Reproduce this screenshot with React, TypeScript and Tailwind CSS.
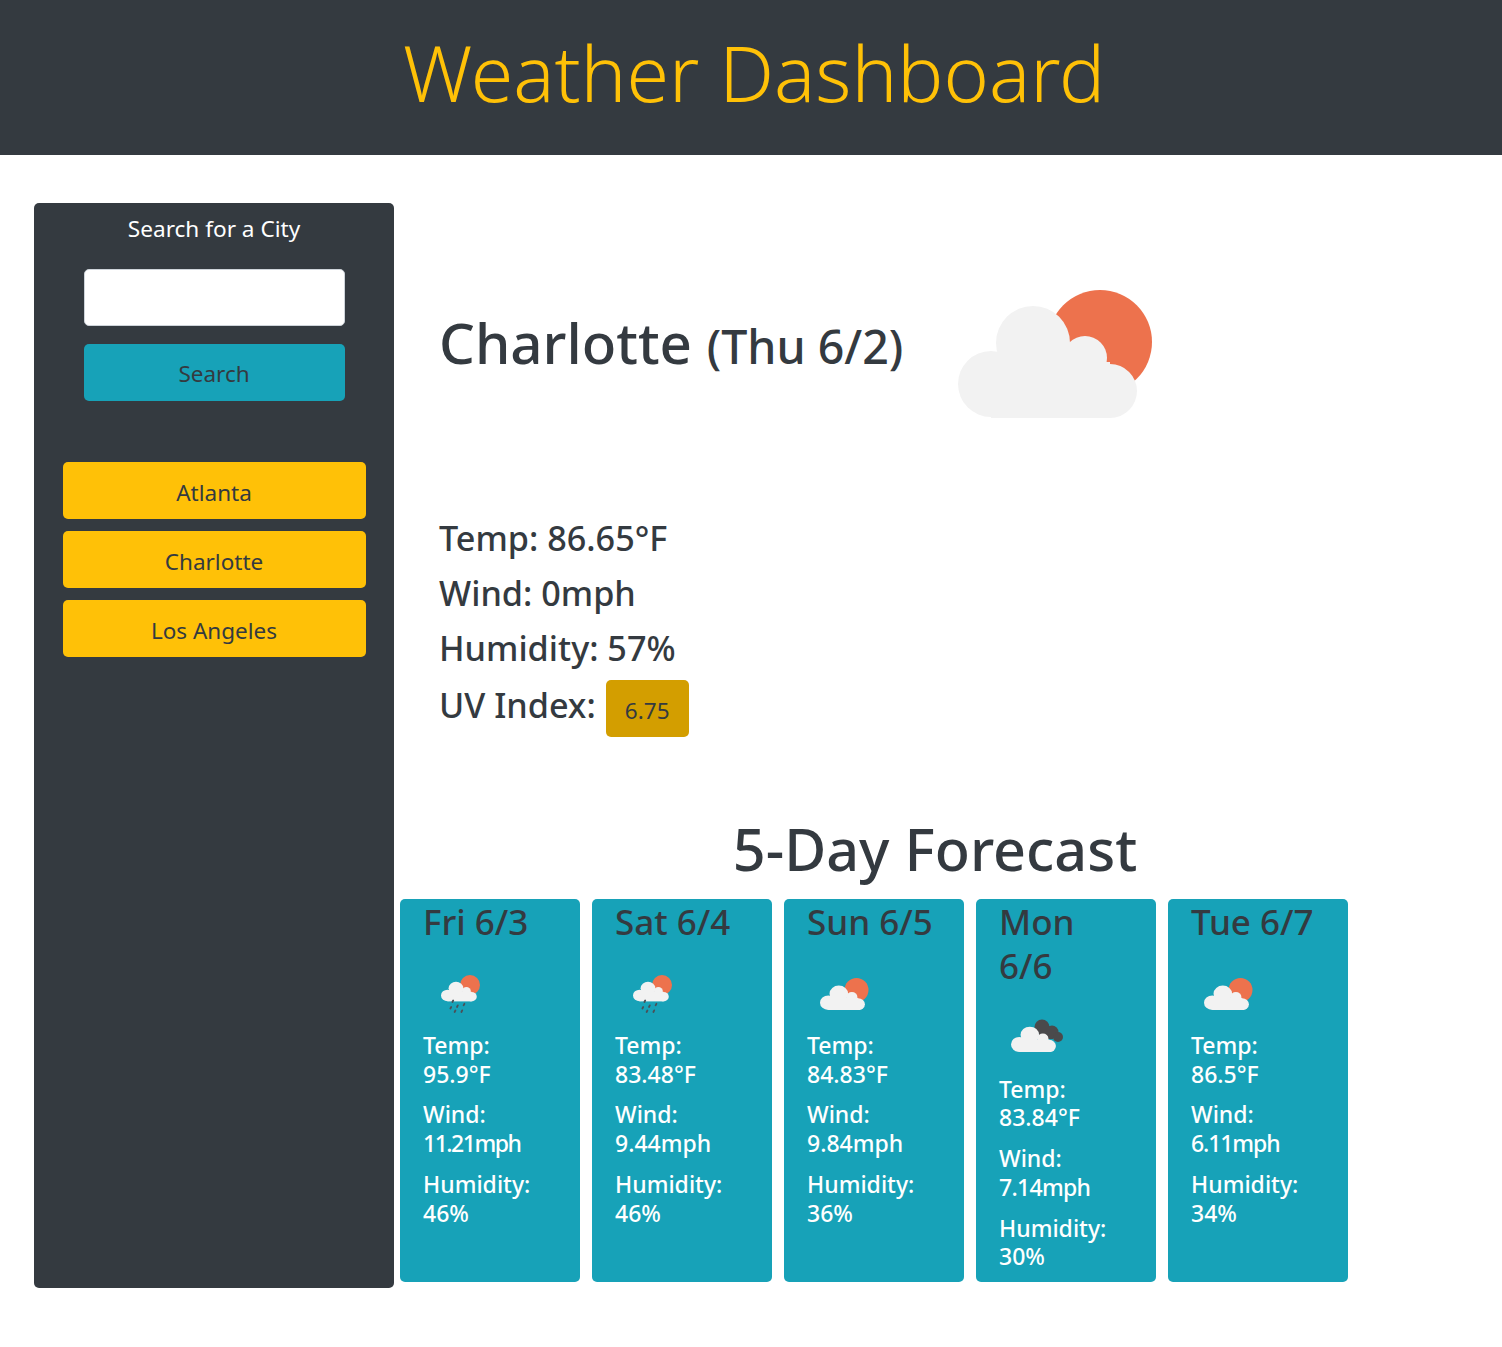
const font = "font-['Noto_Sans',sans-serif]";

const cloudPuffs = (
  <>
    <circle cx="33" cy="94" r="33" />
    <circle cx="75" cy="53" r="37" />
    <circle cx="127" cy="68" r="22" />
    <circle cx="152" cy="101" r="27" />
    <rect x="33" y="72" width="119" height="56" />
  </>
);

function BigCloud() {
  return (
    <svg viewBox="0 0 194 128" className="h-[128px] w-[194px]">
      <circle cx="142" cy="52" r="52" fill="#ed724d" />
      <g fill="#f2f2f2">{cloudPuffs}</g>
    </svg>
  );
}

function SmallIcon({ kind }: { kind: "rain" | "sun" | "dark" }) {
  if (kind === "dark") {
    return (
      <svg viewBox="0 0 52 33" className="-ml-[6px] h-[33px] w-[52px]">
        <g fill="#4a4a4c">
          <circle cx="31" cy="8" r="7.5" />
          <circle cx="41" cy="13" r="6.5" />
          <circle cx="47" cy="18" r="5" />
          <rect x="28" y="8" width="14" height="12" />
        </g>
        <g fill="#f2f2f2" transform="translate(0 4) scale(0.251 0.228)">
          {cloudPuffs}
        </g>
      </svg>
    );
  }
  if (kind === "rain") {
    return (
      <svg viewBox="0 0 40 40" className="h-[40px] w-[40px]">
        <circle cx="29" cy="10" r="10" fill="#ed724d" />
        <g fill="#f2f2f2" transform="translate(0 4) scale(0.2 0.175)">
          {cloudPuffs}
        </g>
        <g stroke="#4a5058" strokeWidth="1.8" strokeLinecap="round">
          <path d="M12.2 25.5 11.4 27" />
          <path d="M10.2 32 9.4 33.5" />
          <path d="M16.8 30.4 16 32" />
          <path d="M23.4 28.8 22.6 30.3" />
          <path d="M14.4 35.5 13.6 37" />
          <path d="M21.2 35.4 20.4 37" />
        </g>
      </svg>
    );
  }
  return (
    <svg viewBox="0 0 49 32" className="-ml-[5px] mt-[3px] h-[32px] w-[49px]">
      <circle cx="36.5" cy="12" r="12" fill="#ed724d" />
      <g fill="#f2f2f2" transform="translate(0 4) scale(0.251 0.22)">
        {cloudPuffs}
      </g>
    </svg>
  );
}

interface Day {
  date: string;
  temp: string;
  wind: string;
  // the ones in the reference are narrow, so these strings run tighter
  windClass: string;
  humidity: string;
  icon: "rain" | "sun" | "dark";
}

const days: Day[] = [
  { date: "Fri 6/3", temp: "95.9°F", wind: "11.21mph", windClass: "tracking-[-1.5px]", humidity: "46%", icon: "rain" },
  { date: "Sat 6/4", temp: "83.48°F", wind: "9.44mph", windClass: "", humidity: "46%", icon: "rain" },
  { date: "Sun 6/5", temp: "84.83°F", wind: "9.84mph", windClass: "", humidity: "36%", icon: "sun" },
  { date: "Mon 6/6", temp: "83.84°F", wind: "7.14mph", windClass: "tracking-[-0.7px]", humidity: "30%", icon: "dark" },
  { date: "Tue 6/7", temp: "86.5°F", wind: "6.11mph", windClass: "tracking-[-1.1px]", humidity: "34%", icon: "sun" },
];

function DayCard({ day }: { day: Day }) {
  return (
    <div className="h-[383px] w-[180px] rounded-[5px] bg-[#17a2b8] px-[23px] pt-[1px]">
      <h3 className="text-[35px] leading-[43.75px] font-medium text-[#343a40]">{day.date}</h3>
      <div className="flex h-[87px] items-start pt-[31px] pl-[18px]">
        <SmallIcon kind={day.icon} />
      </div>
      <div className="flex flex-col gap-[12px] text-[23px] leading-[28.75px] font-medium text-white">
        <p>
          Temp:
          <br />
          {day.temp}
        </p>
        <p>
          Wind:
          <br />
          <span className={day.windClass}>{day.wind}</span>
        </p>
        <p>
          Humidity:
          <br />
          {day.humidity}
        </p>
      </div>
    </div>
  );
}

export default function App() {
  return (
    <div className={`${font} h-[1347px] bg-white text-[#343a40]`}>
      <header className="flex h-[155px] items-center justify-center bg-[#343a40] pb-[10px] pl-[6px]">
        <h1 className="text-[77px] leading-none font-light text-[#ffc107]">Weather Dashboard</h1>
      </header>

      <div className="flex pt-[48px] pl-[34px]">
        <aside className="flex h-[1085px] w-[360px] flex-col items-center rounded-[5px] bg-[#343a40]">
          <h2 className="mt-[11px] text-[22.6px] leading-[30px] text-white">Search for a City</h2>
          <input
            type="text"
            className="mt-[25px] h-[57px] w-[261px] rounded-[5px] border border-[#ced4da] bg-white"
          />
          <button className="mt-[18px] h-[57px] w-[261px] rounded-[5px] bg-[#17a2b8] pt-[3px] text-[22.5px] text-[#343a40]">
            Search
          </button>
          <div className="mt-[61px] flex w-[303px] flex-col gap-[12px]">
            {["Atlanta", "Charlotte", "Los Angeles"].map((city) => (
              <button key={city} className="h-[57px] rounded-[5px] bg-[#ffc107] pt-[4px] text-[22.5px] text-[#343a40]">
                {city}
              </button>
            ))}
          </div>
        </aside>

        <main className="flex-1 pl-[6px]">
          <div className="pl-[39px] pt-[17px]">
            <div className="flex h-[250px] items-center">
              <h2 className="w-[465px] pb-[3px] text-[56.5px] font-medium whitespace-nowrap">
                Charlotte <span className="text-[46.5px]">(Thu 6/2)</span>
              </h2>
              <div className="ml-[54px] pt-[18px]">
                <BigCloud />
              </div>
            </div>
            <div className="mt-[40px] text-[34.2px] leading-[55px] font-medium">
              <p>Temp: 86.65°F</p>
              <p>Wind: 0mph</p>
              <p>Humidity: 57%</p>
              <div className="flex h-[62px] items-start gap-[10px]">
                <span className="mt-[2px]">UV Index:</span>
                <span className="mt-[5px] flex h-[57px] w-[83px] items-center justify-center rounded-[5px] bg-[#d39e00] pt-[3px] text-[22.5px] font-normal">
                  6.75
                </span>
              </div>
            </div>
          </div>

          <h2 className="mt-[75px] w-[1070px] text-center text-[57.5px] leading-[75px] font-medium">5-Day Forecast</h2>
          <div className="mt-[12px] flex gap-[12px]">
            {days.map((day) => (
              <DayCard key={day.date} day={day} />
            ))}
          </div>
        </main>
      </div>
    </div>
  );
}
